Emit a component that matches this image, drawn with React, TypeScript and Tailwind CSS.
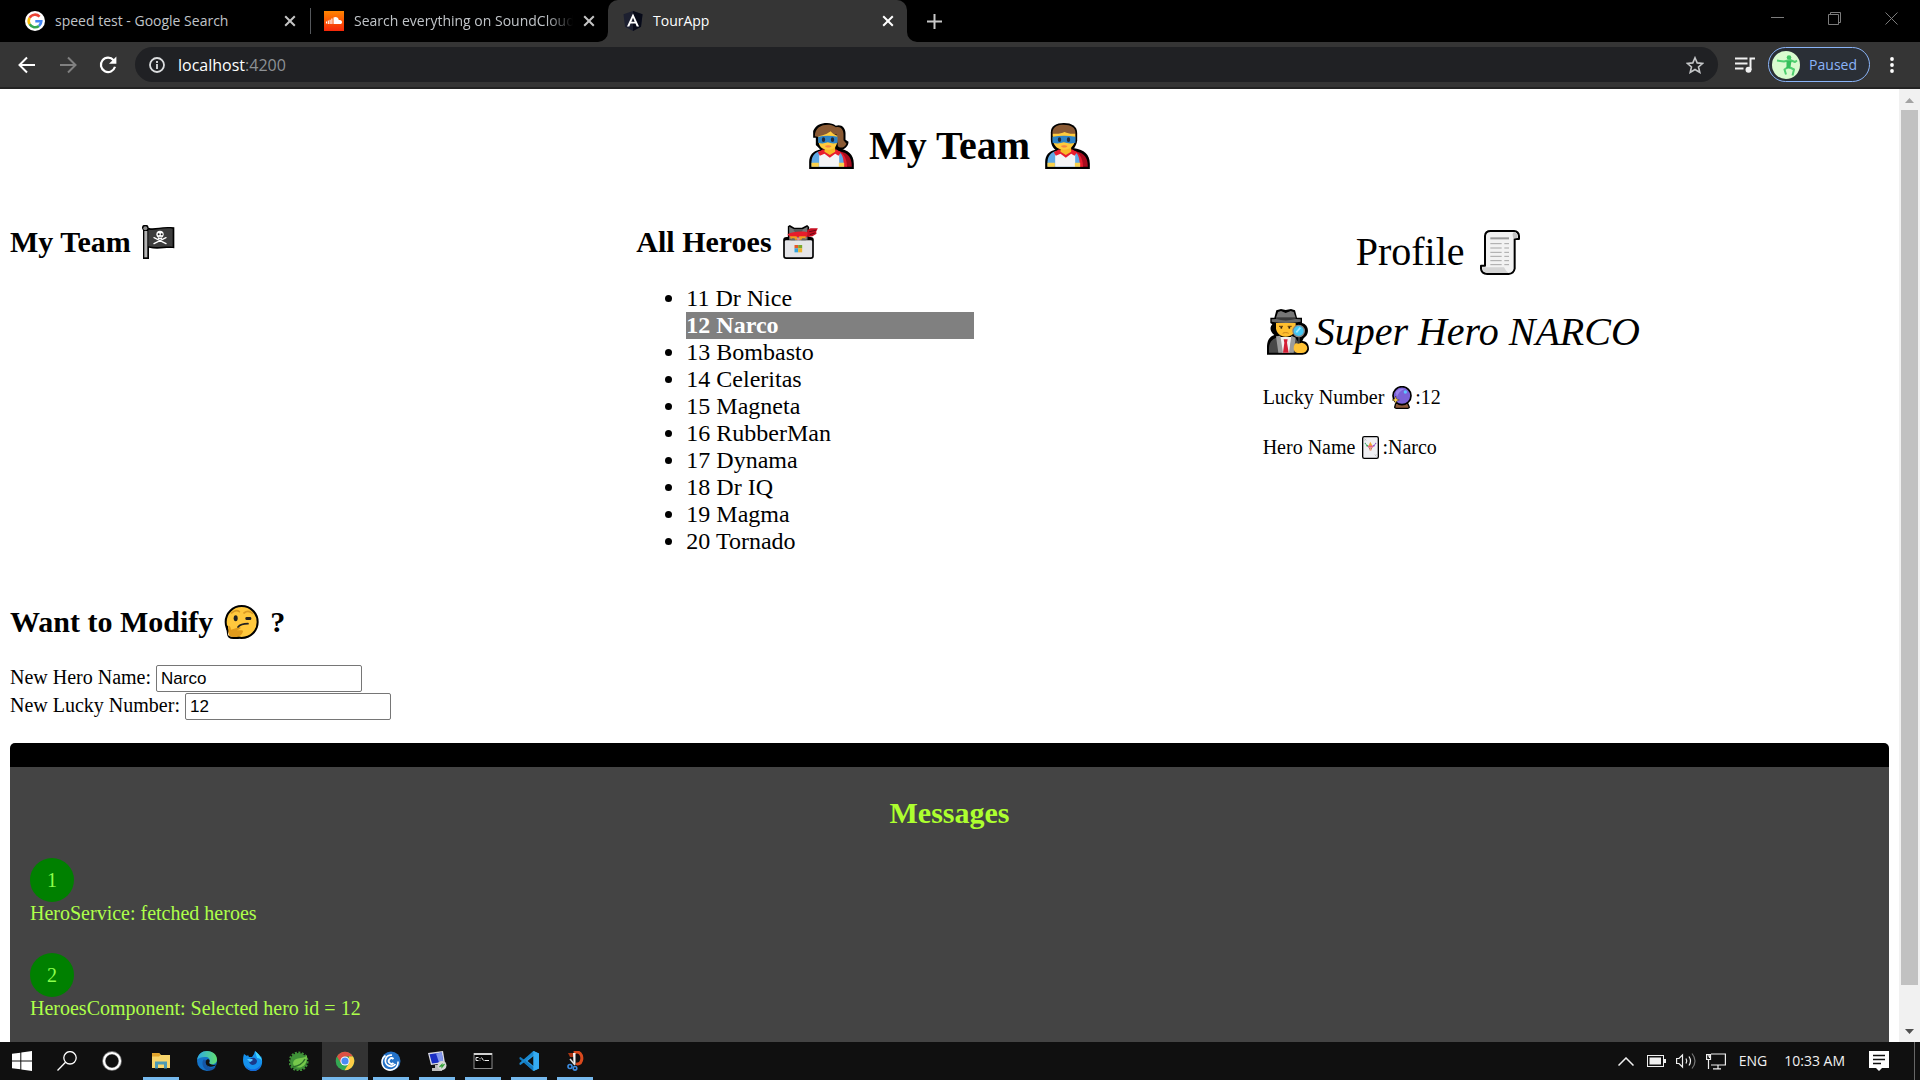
import React from "react";

type IconProps = { className?: string };

/* ---------- Emoji drawings ---------- */

function Superhero({ female }: { female?: boolean }) {
  return (
    <svg role="img" aria-label={female ? "Superheroine" : "Superhero"} viewBox="0 0 134 138" className="h-[46px] w-[45px] shrink-0">
      <path d="M0 138V118C0 96 12 84 30 80L44 76H88C116 80 134 94 134 122V138Z" fill="#000" />
      {female ? (
        <path d="M12 24C20 6 34 0 54 0C64 0 74 3 80 8C96 2 109 14 109 30V50L118 56C118 70 106 80 92 82L34 80L20 66V44H12Z" fill="#000" />
      ) : (
        <path d="M17 28C17 8 34 0 56 0C80 0 96 10 96 30V52C94 70 84 82 72 86H42C26 82 17 66 17 50Z" fill="#000" />
      )}
      <path d="M78 84C110 84 128 98 128 131H104Z" fill="#a80c1e" />
      <path d="M78 82C100 84 112 102 114 131H102L84 96Z" fill="#e81d2f" />
      <path d="M7 131V116C8 98 18 87 34 84H86C98 90 104 104 104 131Z" fill="#5ea9e6" />
      <path d="M30 94L42 84H80L90 94V131H30Z" fill="#f4f4f6" />
      <path d="M7 119H29V131H7ZM89 119H105V131H89Z" fill="#fbd14b" />
      <path d="M26 88L42 79L62 92L80 79L96 88L88 98L78 92L62 104L46 92L32 98Z" fill="#e81d2f" />
      <path d="M46 72H78V86L62 96L46 86Z" fill="#f8b928" />
      {female ? (
        <>
          <path d="M17 40C17 14 36 5 56 5C68 5 78 10 80 13C94 8 103 20 103 34V52L112 62C106 76 92 76 86 70L82 34L28 42Z" fill="#8a5a34" />
          <path d="M28 40C48 36 58 30 64 25L72 32L84 38V56C82 72 74 80 56 80C38 80 28 70 28 52Z" fill="#ffcb3c" />
        </>
      ) : (
        <>
          <path d="M22 40V26C24 10 38 5 56 5C78 5 91 14 91 30V42Z" fill="#8a5a34" />
          <path d="M23 32C40 34 50 30 58 27C68 32 78 33 90 32V52C86 70 76 80 56 80C38 80 26 70 23 52Z" fill="#ffcb3c" />
        </>
      )}
      <path d={female ? "M27 41Q56 36 85 41V59Q72 64 56 58Q40 64 27 59Z" : "M22 41Q56 36 91 41V59Q74 64 56 58Q38 64 22 59Z"} fill="#2d83c6" />
      <ellipse cx="43" cy="50" rx="5" ry="7" fill="#202838" />
      <ellipse cx="70" cy="50" rx="5" ry="7" fill="#202838" />
      <path d="M47 69C53 66 61 66 67 69C63 75 52 75 47 69Z" fill="#f58443" />
    </svg>
  );
}

function PirateFlag() {
  return (
    <svg role="img" aria-label="Pirate flag" viewBox="0 0 99 102" className="h-[34px] w-[33px] shrink-0">
      <path d="M0 10A10 10 0 0 1 20 8C38 14 56 2 97 7V70C74 66 48 76 21 68V102H3V16Z" fill="#000" />
      <path d="M19 14C44 18 60 7 92 11V65C66 62 46 70 19 64Z" fill="#3d3d3d" />
      <path d="M7 18H16V97H7Z" fill="#b4b4b4" />
      <circle cx="10" cy="10" r="6" fill="#8c8c8c" />
      <path d="M36 38L72 56M72 38L36 56" stroke="#fff" strokeWidth="4" strokeLinecap="round" />
      <circle cx="54" cy="28" r="11" fill="#fff" />
      <rect x="48" y="35" width="12" height="7" fill="#fff" />
      <circle cx="50" cy="28" r="3" fill="#222" />
      <circle cx="59" cy="28" r="3" fill="#222" />
      <path d="M50 37H59" stroke="#222" strokeWidth="2" />
    </svg>
  );
}

function HeroCat() {
  return (
    <svg role="img" aria-label="Hero cat with laptop" viewBox="0 0 104 102" className="h-[34px] w-[35px] shrink-0">
      <path d="M14 4L20 0L34 8H56L72 0L78 6V40H14Z" fill="#000" />
      <path d="M0 45Q0 36 10 36H82Q92 36 92 45V93Q92 102 83 102H9Q0 102 0 93Z" fill="#000" />
      <path d="M18 5L33 13H58L73 5V44H18Z" fill="#777" />
      <path d="M30 14H60L54 22H36Z" fill="#595959" />
      <path d="M13 28C28 18 62 18 76 22L72 36H20Z" fill="#e81d2b" />
      <path d="M72 16L82 10H104L99 20L100 26L88 34L74 36Z" fill="#c80f22" />
      <path d="M78 20L98 16M80 29L95 24" stroke="#680814" strokeWidth="3" />
      <path d="M20 34H40L44 44H24ZM48 34H68L66 44H46Z" fill="#f0a020" />
      <path d="M40 38H52L48 46H43Z" fill="#e48a8a" />
      <rect x="5" y="46" width="82" height="51" rx="4" fill="#e5e5e8" />
      <path d="M22 46L26 40H34L36 46ZM54 46L57 40H65L68 46Z" fill="#666" />
      <path d="M34 60H45V70H34Z" fill="#e65a2a" />
      <path d="M45 60H57V70H45Z" fill="#7aa82d" />
      <path d="M34 70H45V82H34Z" fill="#35a4dd" />
      <path d="M45 70H57V82H45Z" fill="#efb52c" />
    </svg>
  );
}

function Scroll() {
  return (
    <svg role="img" aria-label="Scroll" viewBox="0 0 120 135" className="h-[45px] w-[40px] shrink-0">
      <path d="M15 18Q16 3 32 3H102Q116 4 117 18V27H104V116Q101 131 86 132H22Q4 131 3 116V107H15Z" fill="#f2f2f2" stroke="#000" strokeWidth="6" strokeLinejoin="round" />
      <path d="M101 26Q94 10 102 6Q113 7 113 24Z" fill="#c4c4c4" />
      <path d="M6 112H72Q78 125 86 129H22Q9 127 6 112Z" fill="#d4d4d4" />
      <path d="M31 25H87" stroke="#9a9a9a" strokeWidth="6" />
      <path d="M31 41H65M73 41H87M31 54H65M73 54H87M31 67H65M73 67H87M31 79H65M73 79H87M31 92H65M73 92H87M31 104H65M73 104H87" stroke="#a6a6a6" strokeWidth="3" />
    </svg>
  );
}

function Detective() {
  return (
    <svg role="img" aria-label="Detective" viewBox="0 0 126 138" className="h-[46px] w-[42px] shrink-0">
      <path d="M0 137V116C0 92 10 82 22 78C8 68 8 54 16 46L10 42V26H22L28 4L42 0L56 3L72 0L84 4L90 26H105V42C122 46 128 66 118 80L110 88L106 96C120 96 126 108 126 120C124 132 116 137 106 137Z" fill="#000" />
      <path d="M6 131V116C7 98 18 88 34 84H76C90 88 98 98 100 131Z" fill="#484848" />
      <path d="M38 84H74L68 131H46Z" fill="#f1f1f1" />
      <path d="M27 82L40 80L48 131H34ZM73 80L86 86L80 131H66Z" fill="#9b9b9b" />
      <path d="M50 91H62L60 101L65 131H48L52 101Z" fill="#d31f35" />
      <path d="M27 42H86V58C82 76 72 83 56 83C40 83 28 72 27 58Z" fill="#ffbf2f" />
      <path d="M36 52H48M62 52H74" stroke="#58340a" strokeWidth="3" fill="none" />
      <circle cx="43" cy="56" r="3" fill="#302010" />
      <circle cx="67" cy="56" r="3" fill="#302010" />
      <path d="M47 73C52 70 60 70 65 73" stroke="#c8841c" strokeWidth="3" fill="none" />
      <path d="M27 26L33 9L42 6L56 12L71 6L80 9L86 26Z" fill="#777" />
      <path d="M27 26H86V33H27Z" fill="#3a3a3a" />
      <path d="M14 31L27 30Q56 38 86 30L101 31V38Q56 46 14 38Z" fill="#686868" />
      <path d="M96 82V108" stroke="#333" strokeWidth="6" />
      <circle cx="95" cy="66" r="17" fill="#43c7f4" stroke="#858585" strokeWidth="4" />
      <path d="M88 70L100 56" stroke="#a5eaff" strokeWidth="5" />
      <path d="M80 120Q80 98 94 104L104 101Q120 104 121 118Q119 132 104 132H92Q82 130 80 120Z" fill="#ffc235" />
    </svg>
  );
}

function CrystalBall() {
  return (
    <svg role="img" aria-label="Crystal ball" viewBox="0 0 63 69" className="h-[23px] w-[21px] shrink-0">
      <path d="M14 52H50L55 64Q54 67 50 67H16Q12 67 11 64Z" fill="#8d5b3b" stroke="#000" strokeWidth="4" />
      <circle cx="33" cy="29" r="27" fill="#7b62d8" stroke="#000" strokeWidth="5" />
      <path d="M14 18Q24 6 40 9Q22 16 18 34Z" fill="#9a83ec" />
      <circle cx="43" cy="18" r="5" fill="#5cc5ff" />
      <path d="M14 30L17 39L25 42L17 45L14 54L11 45L3 42L11 39Z" fill="#ffd24a" stroke="#000" strokeWidth="1" />
    </svg>
  );
}

function Joker() {
  return (
    <svg role="img" aria-label="Joker card" viewBox="0 0 51 69" className="h-[23px] w-[17px] shrink-0">
      <rect x="2" y="2" width="47" height="65" rx="5" fill="#f0f0f3" stroke="#000" strokeWidth="4" />
      <path d="M7 7L13 14M7 14L12 8M38 55L44 62M44 55L39 60" stroke="#bbb" strokeWidth="2" />
      <path d="M15 33L10 23L20 29Z" fill="#2ca05a" />
      <path d="M19 31L25 17L32 31Z" fill="#f0a52c" />
      <path d="M31 29L41 23L36 33Z" fill="#8a4ac8" />
      <path d="M17 31Q25 26 34 31L32 35H19Z" fill="#e8628a" />
      <path d="M20 34H31L28 44H23Z" fill="#e8a088" />
      <path d="M22 38H24M27 38H29" stroke="#444" strokeWidth="2" />
      <circle cx="10" cy="22" r="2" fill="#2ca05a" />
      <circle cx="41" cy="22" r="2" fill="#8a3ac0" />
    </svg>
  );
}

function Thinking() {
  return (
    <svg role="img" aria-label="Thinking face" viewBox="0 0 105 102" className="h-[34px] w-[35px] shrink-0">
      <circle cx="53" cy="51" r="48" fill="#ffc83d" stroke="#000" strokeWidth="6" />
      <path d="M6 62L12 62V90Q20 97 40 96L46 102H28Q10 102 9 86Z" fill="#000" />
      <path d="M13 64Q19 60 21 74L40 68Q52 64 50 70Q46 74 38 76H54Q60 78 54 86Q46 97 30 96Q13 97 13 84Z" fill="#e09a1c" />
      <ellipse cx="35" cy="40" rx="6" ry="9" fill="#222" />
      <rect x="64" y="36" width="18" height="9" rx="4" fill="#222" />
      <path d="M23 24Q36 12 46 20M60 24Q72 14 86 25" stroke="#d99a24" strokeWidth="5" fill="none" strokeLinecap="round" />
      <path d="M42 66Q50 56 72 56" stroke="#222" strokeWidth="5" fill="none" strokeLinecap="round" />
    </svg>
  );
}

/* ---------- Browser icons ---------- */

function GoogleIcon() {
  return (
    <svg viewBox="0 0 20 20" className="size-5 shrink-0" fill="none">
      <circle cx="10" cy="10" r="10" fill="#fff" />
      <path d="M14.6 5.6A6.3 6.3 0 0 0 4.6 6.8" stroke="#ea4335" strokeWidth="2.6" />
      <path d="M4.6 6.8A6.3 6.3 0 0 0 4.6 13.2" stroke="#fbbc05" strokeWidth="2.6" />
      <path d="M4.6 13.2A6.3 6.3 0 0 0 14 14.9" stroke="#34a853" strokeWidth="2.6" />
      <path d="M14 14.9A6.3 6.3 0 0 0 16.3 10.2H10.3" stroke="#4285f4" strokeWidth="2.6" />
    </svg>
  );
}

function SoundCloudIcon() {
  return (
    <svg viewBox="0 0 20 20" className="size-5 shrink-0">
      <defs>
        <linearGradient id="sc" x1="0" y1="0" x2="0" y2="1">
          <stop offset="0" stopColor="#ff8500" />
          <stop offset="1" stopColor="#f5280a" />
        </linearGradient>
      </defs>
      <rect width="20" height="20" fill="url(#sc)" />
      <path d="M9.5 13V6.6C12 5.2 14.5 6.8 14.8 9.1C17 8.7 18.2 10 18 11.4C17.8 12.5 17 13 16 13Z" fill="#fff" />
      <path d="M2.5 10.5V12.6M4.3 9.5V13M6.1 8.8V13M7.9 7.6V13" stroke="#fff" strokeWidth="1.1" />
    </svg>
  );
}

function AngularIcon() {
  return (
    <svg viewBox="0 0 20 20" className="size-5 shrink-0">
      <path d="M10 0L19.5 3.3L18 15.8L10 20L2 15.8L.5 3.3Z" fill="#1d2030" />
      <path d="M10 0L19.5 3.3L18 15.8L10 20Z" fill="#070a18" />
      <path d="M10 2.4L4 15.6H6.3L7.5 12.6H12.5L13.7 15.6H16ZM10 6.8L11.7 10.7H8.3Z" fill="#fff" fillRule="evenodd" />
    </svg>
  );
}

function Cross({ className }: IconProps) {
  return (
    <svg viewBox="0 0 12 12" className={className} fill="none" stroke="currentColor">
      <path d="M1.2 1.2L10.8 10.8M10.8 1.2L1.2 10.8" strokeWidth="2" />
    </svg>
  );
}

function TabClose({ label, active }: { label: string; active?: boolean }) {
  return (
    <button aria-label={`Close ${label}`} className={active ? "shrink-0 text-white" : "shrink-0 text-[#c4c4c4]"}>
      <Cross className="size-3" />
    </button>
  );
}

function TabFlare({ className, d }: { className: string; d: string }) {
  return (
    <svg viewBox="0 0 10 10" className={className} fill="#353535">
      <path d={d} />
    </svg>
  );
}

function BrowserHeader() {
  return (
    <header className="shrink-0 font-['Open_Sans','Noto_Sans',sans-serif]">
      <div className="flex h-[42px] items-stretch bg-black text-sm text-[#c0c4c8]">
        <div className="flex w-[310px] items-center pr-3.5 pl-[25px]">
          <GoogleIcon />
          <span className="ml-2.5 flex-1 overflow-hidden whitespace-nowrap">speed test - Google Search</span>
          <TabClose label="Google Search" />
        </div>
        <div className="my-2 w-px bg-[#55585c]" />
        <div className="flex w-[297px] items-center pr-[13px] pl-[13px]">
          <SoundCloudIcon />
          <span className="mr-2.5 ml-2.5 flex-1 overflow-hidden whitespace-nowrap [mask-image:linear-gradient(to_right,black_88%,transparent)]">
            Search everything on SoundCloud
          </span>
          <TabClose label="SoundCloud" />
        </div>
        <div className="relative flex w-[299px] items-center rounded-t-[10px] bg-[#353535] pr-[13px] pl-[15px] text-white">
          <TabFlare className="absolute bottom-0 -left-2.5 size-2.5" d="M10 0V10H0A10 10 0 0 0 10 0Z" />
          <TabFlare className="absolute -right-2.5 bottom-0 size-2.5" d="M0 0V10H10A10 10 0 0 1 0 0Z" />
          <AngularIcon />
          <span className="ml-2.5 flex-1">TourApp</span>
          <TabClose label="TourApp" active />
        </div>
        <button aria-label="New tab" className="ml-4 px-1">
          <svg viewBox="0 0 15 15" className="size-[15px]" stroke="#c8c8c8" strokeWidth="2">
            <path d="M7.5 0V15M0 7.5H15" />
          </svg>
        </button>
        <div className="ml-auto flex items-start gap-11 pt-3 pr-[22px] text-[#7c7c7c]">
          <button aria-label="Minimize">
            <svg viewBox="0 0 13 13" className="size-[13px]" fill="none" stroke="currentColor">
              <path d="M0 5.5H13" />
            </svg>
          </button>
          <button aria-label="Restore">
            <svg viewBox="0 0 13 13" className="size-[13px]" fill="none" stroke="currentColor">
              <path d="M.5 2.5H10.5V12.5H.5ZM2.5 2.5V.5H12.5V10.5H10.5" />
            </svg>
          </button>
          <button aria-label="Close window">
            <svg viewBox="0 0 13 13" className="size-[13px]" fill="none" stroke="currentColor">
              <path d="M.5 .5L12.5 12.5M12.5 .5L.5 12.5" />
            </svg>
          </button>
        </div>
      </div>
      <div className="flex h-[47px] items-center border-b-2 border-[#232323] bg-[#353535] pr-[26px] pl-[18px]">
        <button aria-label="Back">
          <svg viewBox="0 0 18 18" className="size-[18px]" fill="none" stroke="#fff" strokeWidth="2">
            <path d="M17 9H2M9 1.5L1.5 9L9 16.5" />
          </svg>
        </button>
        <button aria-label="Forward" className="ml-[23px]">
          <svg viewBox="0 0 18 18" className="size-[18px]" fill="none" stroke="#808080" strokeWidth="2">
            <path d="M1 9H16M9 1.5L16.5 9L9 16.5" />
          </svg>
        </button>
        <button aria-label="Reload" className="ml-[22px]">
          <svg viewBox="0 0 18 18" className="size-[18px]" fill="none" stroke="#fff" strokeWidth="2.2">
            <path d="M14.6 4.2A7.2 7.2 0 1 0 16 10.8" />
            <path d="M17.4 .4V7.8H10Z" fill="#fff" stroke="none" />
          </svg>
        </button>
        <div className="ml-[18px] flex h-[35px] flex-1 items-center rounded-full bg-[#202124] px-3.5">
          <svg viewBox="0 0 16 16" className="size-4" fill="none" stroke="#dcdee0">
            <circle cx="8" cy="8" r="7" strokeWidth="1.8" />
            <path d="M8 7V12M8 4V6" strokeWidth="1.8" />
          </svg>
          <div className="ml-[13px] flex-1 text-base text-white">
            localhost<span className="text-[#8d9195]">:4200</span>
          </div>
          <button aria-label="Bookmark">
            <svg viewBox="0 0 18 18" className="size-[18px]" fill="none" stroke="#c4c6c8" strokeWidth="1.6">
              <path d="M9 1.8L11.2 6.9L16.7 7.4L12.5 11L13.8 16.4L9 13.5L4.2 16.4L5.5 11L1.3 7.4L6.8 6.9Z" />
            </svg>
          </button>
        </div>
        <button aria-label="Media controls" className="ml-[17px]">
          <svg viewBox="0 0 20 16" className="h-4 w-5" fill="none" stroke="#f0f0f0" strokeWidth="2">
            <path d="M0 1.5H12.5M0 6.5H12.5M0 11.5H8.5M15.5 13V1.5H20" />
            <circle cx="13.5" cy="12.7" r="3" fill="#f0f0f0" stroke="none" />
          </svg>
        </button>
        <button className="ml-[13px] flex h-[35px] items-center rounded-full border border-[#8ab4f8] bg-[#2a2f36] pr-3 pl-[3px] text-sm text-[#8ab4f8]">
          <svg viewBox="0 0 28 28" className="mr-[9px] size-7">
            <circle cx="14" cy="14" r="14" fill="#d9fbcf" />
            <circle cx="17" cy="6.5" r="2.3" fill="#3fc463" />
            <path d="M5 9.5L12 10.5L18 9L23 11L25 9.5M18.5 10L17 16L22 18.5L20.5 24.500M16 16L12.500 18.500L14 23.500" fill="none" stroke="#4fcf70" strokeWidth="2" strokeLinejoin="round" />
            <path d="M14.500 10H19.500L18 17.500H14.500Z" fill="#35bf5b" />
          </svg>
          Paused
        </button>
        <button aria-label="Menu" className="ml-5">
          <svg viewBox="0 0 4 16" className="h-4 w-1" fill="#fff">
            <circle cx="2" cy="2" r="1.9" />
            <circle cx="2" cy="8" r="1.9" />
            <circle cx="2" cy="14" r="1.9" />
          </svg>
        </button>
      </div>
    </header>
  );
}

/* ---------- Page ---------- */

const heroes = [
  { id: 11, name: "Dr Nice" },
  { id: 12, name: "Narco" },
  { id: 13, name: "Bombasto" },
  { id: 14, name: "Celeritas" },
  { id: 15, name: "Magneta" },
  { id: 16, name: "RubberMan" },
  { id: 17, name: "Dynama" },
  { id: 18, name: "Dr IQ" },
  { id: 19, name: "Magma" },
  { id: 20, name: "Tornado" },
];

const messages = ["HeroService: fetched heroes", "HeroesComponent: Selected hero id = 12"];

function SectionTitle({ children }: { children: React.ReactNode }) {
  return <h2 className="flex items-center gap-[11px] text-[30px] leading-[34px] font-bold">{children}</h2>;
}

function Field({ id, label, value }: { id: string; label: string; value: string }) {
  return (
    <div className="flex h-7 items-start gap-[5px]">
      <label htmlFor={id} className="leading-6">{label}</label>
      <input
        id={id}
        defaultValue={value}
        className="h-[27px] w-[206px] rounded-[2px] border border-[#767676] bg-white px-1 font-['Liberation_Sans',Arial,sans-serif] text-[17px]"
      />
    </div>
  );
}

function TeamPage() {
  return (
    <main className="min-w-0 flex-1 overflow-hidden bg-white px-2.5 text-xl leading-[23px] text-black">
      <h1 className="mt-[33px] flex items-center justify-center gap-[15px] text-[40px] leading-[48px] font-bold">
        <Superhero female />
        My Team
        <Superhero />
      </h1>
      <div className="mt-[55px] grid grid-cols-3">
        <section>
          <SectionTitle>My Team <PirateFlag /></SectionTitle>
        </section>
        <section>
          <SectionTitle>All Heroes <HeroCat /></SectionTitle>
          <ul className="mt-[26px] w-[338px] list-disc pl-[50px] text-2xl leading-[27px]">
            {heroes.map((h) => (
              <li key={h.id} className={h.id === 12 ? "list-none bg-[#808080] font-bold text-white" : ""}>
                {h.id} {h.name}
              </li>
            ))}
          </ul>
        </section>
        <section className="pt-[3px]">
          <div className="flex items-center gap-[15px] pl-[93px] text-[40px] leading-[48px]">
            Profile <Scroll />
          </div>
          <div className="mt-8 flex items-center gap-1.5 pl-1 text-[40px] leading-[48px] whitespace-nowrap">
            <Detective />
            <em>Super Hero NARCO</em>
          </div>
          <p className="mt-[30px] flex items-center">
            Lucky Number <span className="mr-[3px] ml-[7px]"><CrystalBall /></span>:12
          </p>
          <p className="mt-[27px] flex items-center">
            Hero Name <span className="mr-[3px] ml-[7px]"><Joker /></span>:Narco
          </p>
        </section>
      </div>
      <section className="mt-[50px]">
        <SectionTitle>Want to Modify <Thinking /> ?</SectionTitle>
        <div className="mt-[26px]">
          <Field id="hero-name" label="New Hero Name:" value="Narco" />
          <Field id="lucky-number" label="New Lucky Number:" value="12" />
        </div>
      </section>
      <section className="mt-[22px] rounded-t-[5px] border-t-[24px] border-black bg-[#444] px-5 pb-10 text-[#adff4a]">
        <h2 className="pt-[29px] text-center text-[30px] leading-[34px] font-bold text-[#adff2f]">Messages</h2>
        {messages.map((text, i) => (
          <div key={text} className="mt-7">
            <div className="flex size-11 items-center justify-center rounded-full bg-[#008000] text-[#8cff4c]">{i + 1}</div>
            <div>{text}</div>
          </div>
        ))}
      </section>
    </main>
  );
}

function Scrollbar() {
  return (
    <div className="flex w-[21px] shrink-0 flex-col items-center bg-[#f1f1f1]">
      <svg viewBox="0 0 21 21" className="size-[21px] shrink-0">
        <path d="M6 14H15L10.5 9Z" fill="#a3a3a3" />
      </svg>
      <div className="w-[17px] grow-[24] bg-[#c1c1c1]" />
      <div className="grow" />
      <svg viewBox="0 0 21 21" className="size-[21px] shrink-0">
        <path d="M6 8H15L10.5 13Z" fill="#505050" />
      </svg>
    </div>
  );
}

/* ---------- Taskbar ---------- */

const glyph = "size-5";

function TaskCell({ label, open, active, children }: { label: string; open?: boolean; active?: boolean; children: React.ReactNode }) {
  return (
    <button
      aria-label={label}
      className={active ? "relative flex h-full w-[46px] items-center justify-center bg-[#333]" : "relative flex h-full w-[46px] items-center justify-center"}
    >
      {children}
      {open && <span className={active ? "absolute inset-x-0 bottom-0 h-[3px] bg-[#76b9ed]" : "absolute inset-x-[5px] bottom-0 h-[3px] bg-[#76b9ed]"} />}
    </button>
  );
}

function Taskbar() {
  return (
    <footer className="flex h-[38px] shrink-0 items-center bg-[#101010] font-['Open_Sans','Noto_Sans',sans-serif] text-sm text-[#f0f0f0]">
      <button aria-label="Start" className="flex w-11 justify-center">
        <svg viewBox="0 0 20 20" className={glyph} fill="#fff">
          <path d="M0 2.8L8.3 1.7V9.5H0ZM9.3 1.5L20 0V9.5H9.3ZM0 10.5H8.3V18.3L0 17.2ZM9.3 10.5H20V20L9.3 18.5Z" />
        </svg>
      </button>
      <button aria-label="Search" className="flex w-[46px] justify-center">
        <svg viewBox="0 0 20 20" className={glyph} fill="none" stroke="#fff" strokeWidth="1.3">
          <circle cx="13" cy="6.8" r="6.2" />
          <path d="M8.5 11.3L.5 19.5" />
        </svg>
      </button>
      <button aria-label="Cortana" className="mr-1 flex w-11 justify-center">
        <svg viewBox="0 0 20 20" className={glyph} fill="none">
          <circle cx="10" cy="10" r="8.2" stroke="#777" strokeWidth="3.4" />
          <circle cx="10" cy="10" r="8" stroke="#fff" strokeWidth="2.2" />
        </svg>
      </button>
      <TaskCell label="File Explorer" open>
        <svg viewBox="0 0 20 20" className={glyph}>
          <path d="M1 2H8L10 4H19V17H1Z" fill="#f8d56b" />
          <path d="M1 2H8L9.5 4L8 5.5H1Z" fill="#e2a52d" />
          <path d="M4 17.5V10.5H16V17.5H13V13.5H7V17.5Z" fill="#4c9ab5" />
        </svg>
      </TaskCell>
      <TaskCell label="Edge">
        <svg viewBox="0 0 20 20" className={glyph}>
          <defs>
            <linearGradient id="edgeTop" x1="0" y1="0" x2="1" y2="0">
              <stop offset="0" stopColor="#2aa8e8" />
              <stop offset="1" stopColor="#62e070" />
            </linearGradient>
          </defs>
          <circle cx="10" cy="10" r="10" fill="#1473c8" />
          <path d="M0 9C1 3 5 0 10 0C16 0 20 4 20 8.5C20 12 17 13.5 14.5 13.5C12 13.5 12 12 12.8 11C13.5 8 11.500 6 8.500 6C5 5.8 1.5 7 0 9Z" fill="url(#edgeTop)" />
          <path d="M7 9.5C6 14 9.5 18 14 17.5C16 17.5 18 16.5 19 15.5L20 20H14Z" fill="#101010" />
          <path d="M6.5 8.5C4 12 6 19 12 19.8C16 19.5 18 17.5 18.8 15.6C13 18.5 7.5 15 9.5 9Z" fill="#1556a5" />
          <path d="M10 8.5C7.5 10.5 8.8 15 13 15.7C16 16 18 15 19.3 13.5C17.5 14.2 14 14 12.5 12.5C11.5 11.5 13 10.5 12.6 9.5C12 8 11 8 10 8.5Z" fill="#101010" />
        </svg>
      </TaskCell>
      <TaskCell label="Firefox Developer Edition">
        <svg viewBox="0 0 20 20" className={glyph}>
          <path d="M1 3L4 5L5 4L6 6H9L11 3L12 0C14 2 16 3 17 6L18 5C21 12 18 20 10 20C2 20 -2 12 1 3Z" fill="#1591ed" />
          <path d="M12 0C14 2 18 4 19 10C18 8 16 7 14 7Z" fill="#41d4ff" />
          <path d="M2 13C4 19 14 21 18 13C17 19 13 20 10 20C6 20 3 17 2 13Z" fill="#1667dc" />
          <path d="M6 9C8 6 13 6 14 10C14 14 8 16 6 11L9 10Z" fill="#1a3889" />
          <path d="M4 8L9 8L10 9L7 11Z" fill="#58c9ff" />
        </svg>
      </TaskCell>
      <TaskCell label="Spring Tool Suite">
        <svg viewBox="0 0 20 20" className={glyph}>
          <circle cx="9.5" cy="10.5" r="8.5" fill="#3f9138" />
          <circle cx="9.5" cy="10.5" r="9" fill="none" stroke="#3f9138" strokeWidth="2" strokeDasharray="2 1.5" />
          <path d="M18 4C16 7 13 6.500 9 7.500C4 8.500 2.500 13 6 15.500C10 18 16 16 17.500 10C18 8 18 6 18 4Z" fill="#76c84b" />
          <path d="M4 16C10 15 14 12 16 8" stroke="#2c6e2a" strokeWidth="1.5" fill="none" />
        </svg>
      </TaskCell>
      <TaskCell label="Chrome" open active>
        <svg viewBox="0 0 20 20" className={glyph}>
          <circle cx="10" cy="10" r="9.3" fill="#34a853" />
          <path d="M2 5.4A9.3 9.3 0 0 1 18 5.4H10L6 12.3Z" fill="#dd5144" />
          <path d="M18 5.4A9.3 9.3 0 0 1 9.5 19.3L14 12.3L14 5.4Z" fill="#ffcd46" />
          <circle cx="10" cy="10" r="4.6" fill="#fff" />
          <circle cx="10" cy="10" r="3.6" fill="#4a8af4" />
        </svg>
      </TaskCell>
      <TaskCell label="Citrix Workspace" open>
        <svg viewBox="0 0 20 20" className={glyph} fill="none" stroke="#fff">
          <circle cx="10" cy="10" r="9.5" fill="#2472c8" stroke="none" />
          <path d="M4.5 4.5A8 8 0 1 0 17 10.5" strokeWidth="1.6" />
          <path d="M11 4.2A5.6 5.6 0 1 0 14.5 13" strokeWidth="1.8" />
          <path d="M12.5 8A2.8 2.8 0 1 0 12.5 12" strokeWidth="1.8" />
        </svg>
      </TaskCell>
      <TaskCell label="Remote Desktop" open>
        <svg viewBox="0 0 20 20" className={glyph}>
          <path d="M1 2L16 0L18 12L4 14Z" fill="#dcdce4" />
          <path d="M2.5 3.3L14.7 1.6L16.3 11L5 12.5Z" fill="#1b2fc4" />
          <path d="M9 2.4L14.7 1.6L16.3 11L12 11.5Z" fill="#8297ec" />
          <path d="M8 14H13V17H16L15 20H5V17H8Z" fill="#bdbdbd" />
          <circle cx="15" cy="14.5" r="4.5" fill="#d8d8d8" />
          <path d="M12.5 16L15 13.5V16L17.5 13" stroke="#36a43b" strokeWidth="1.2" fill="none" />
        </svg>
      </TaskCell>
      <TaskCell label="Command Prompt" open>
        <svg viewBox="0 0 20 20" className={glyph}>
          <rect x="1" y="2.5" width="18" height="15" fill="#050505" stroke="#8b8b8b" />
          <path d="M1 3H19" stroke="#d0d0d0" strokeWidth="2" />
          <path d="M5.5 6.5H3V9.5H5.5M7 7V7.8M7 8.8V9.5M8.5 6.5L10.5 9.5M11.5 9.5H16" stroke="#eee" fill="none" />
        </svg>
      </TaskCell>
      <TaskCell label="Visual Studio Code" open>
        <svg viewBox="0 0 20 20" className={glyph}>
          <path d="M14.5 0L20 2.5V17.5L14.5 20L4 10.5Z" fill="#2a9fe8" />
          <path d="M14.5 5L8.5 10L14.5 15Z" fill="#101010" />
          <path d="M1.5 6L14.5 16V20L.5 8V6.6Z" fill="#1479bd" />
          <path d="M1.5 14L14.5 4V0L.5 12V13.4Z" fill="#1a8ad2" />
          <path d="M14.5 0L20 2.5V17.5L14.5 20Z" fill="#35abf2" />
        </svg>
      </TaskCell>
      <TaskCell label="Snipping Tool" open>
        <svg viewBox="0 0 20 20" className={glyph} fill="none">
          <path d="M9 2C14 -1 18 4 16.5 9.500C15.500 13 13 13.500 11 12.500" stroke="#d9491d" strokeWidth="3" />
          <path d="M9 2H3L5 6H9" fill="#a93512" />
          <path d="M8 2L10.5 2V13L8.5 13Z" fill="#f4f4f4" />
          <path d="M5 8L10 14" stroke="#ddd" strokeWidth="1.5" />
          <circle cx="5" cy="15.5" r="2" stroke="#3b8be0" strokeWidth="1.6" />
          <circle cx="10" cy="17.3" r="1.8" stroke="#3b8be0" strokeWidth="1.6" />
        </svg>
      </TaskCell>

      <div className="ml-auto flex h-full items-center">
        <button aria-label="Show hidden icons">
          <svg viewBox="0 0 16 9" className="h-[9px] w-4" fill="none" stroke="#f0f0f0" strokeWidth="1.5">
            <path d="M.5 8.5L8 1L15.5 8.5" />
          </svg>
        </button>
        <svg viewBox="0 0 19 12" className="ml-[13px] h-3 w-[19px]" fill="none" stroke="#f0f0f0">
          <rect x=".5" y=".5" width="16" height="11" />
          <path d="M2.5 2.5H14V9.5H2.5Z" fill="#f0f0f0" stroke="none" />
          <path d="M18 4V8" strokeWidth="2" />
        </svg>
        <svg viewBox="0 0 20 18" className="ml-2.5 h-[18px] w-5" fill="none" stroke="#f0f0f0" strokeWidth="1.2">
          <path d="M.6 6.5H3L6.5 3V15L3 11.5H.6Z" />
          <path d="M10 6.5Q11.5 9 10 11.5M13 4.5Q16 9 13 13.5" />
          <path d="M16 1.5Q22 9 16 16.5" stroke="#777" />
        </svg>
        <svg viewBox="0 0 20 17" className="ml-2.5 h-[17px] w-5" fill="none" stroke="#f0f0f0" strokeWidth="1.2">
          <path d="M5 1H19.4V12H5M12 12V15.5M7 15.8H15M2.5 7V16M.6 1.6H4.5V6.5H.6ZM2 3H3.5V5" />
        </svg>
        <span className="ml-[13px]">ENG</span>
        <span className="ml-[17px]">10:33 AM</span>
        <button aria-label="Notifications" className="ml-6">
          <svg viewBox="0 0 20 20" className={glyph}>
            <path d="M0 0H20V17H13L10 20L7 17H0Z" fill="#fff" />
            <path d="M4 4.5H16M4 8.5H16M4 12.5H12" stroke="#101010" strokeWidth="1.3" />
          </svg>
        </button>
        <span className="mr-[5px] ml-[25px] h-full w-px bg-[#666]" />
      </div>
    </footer>
  );
}

export default function App() {
  return (
    <div className="flex h-screen flex-col overflow-hidden bg-white font-['Liberation_Serif','Times_New_Roman',serif]">
      <BrowserHeader />
      <div className="flex min-h-0 flex-1">
        <TeamPage />
        <Scrollbar />
      </div>
      <Taskbar />
    </div>
  );
}
